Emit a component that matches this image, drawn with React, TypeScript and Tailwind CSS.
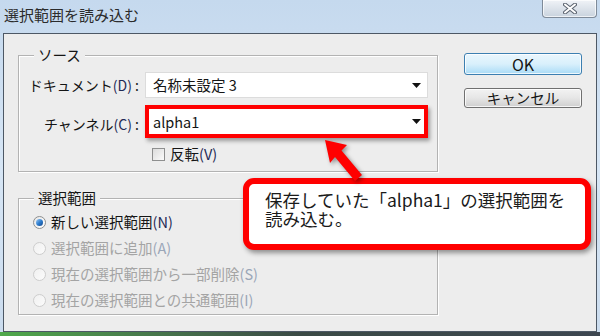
import React from "react";

const DropArrow = () => (
	<svg width="9" height="5" viewBox="0 0 9 5" className="shrink-0">
		<path d="M0 0 H9 L4.5 5 Z" fill="#111" />
	</svg>
);

const Radio = ({ checked, disabled, label, keyChar }: { checked?: boolean; disabled?: boolean; label: string; keyChar: string }) => (
	<div className="flex h-[26px] items-center">
		<div
			className={
				checked
					? "flex h-[13px] w-[13px] items-center justify-center rounded-full border border-[#8e8f8f] bg-gradient-to-br from-[#e6e6e6] to-[#ffffff]"
					: "h-[13px] w-[13px] rounded-full border border-[#cdcdcd] bg-gradient-to-br from-[#f0f0f0] to-[#fbfbfb]"
			}
		>
			{checked && <div className="h-[7px] w-[7px] rounded-full bg-gradient-to-br from-[#9ccbf1] via-[#2f7fd0] to-[#12468a]" />}
		</div>
		<span className={"ml-[5px] text-[14.5px] leading-[18px] " + (disabled ? "text-[#a4a4a4]" : "text-[#151515]")}>
			{label}
			<span className={disabled ? "text-[#9aa6b8]" : "text-[#1f2a55]"}>({keyChar})</span>
		</span>
	</div>
);

const App = () => {
	return (
		<div className="relative h-[336px] w-[600px] overflow-hidden bg-gradient-to-b from-[#c5d9ee] via-[#d7e6f5] to-[#cbdcee] font-['Noto_Sans_CJK_JP',sans-serif] text-[#151515]">
			{/* Title bar */}
			<div className="flex h-[33px] items-start justify-between">
				<div className="pl-[4px] pt-[5px] text-[15px] leading-[20px] text-[#2b2b2b]">選択範囲を読み込む</div>
				<div className="mr-[3px] flex h-[18px] w-[55px] items-center justify-center rounded-b-[4px] border border-t-0 border-[#7f8b99] bg-gradient-to-b from-[#f0f3f7] to-[#c9d3de] shadow-[inset_0_0_0_1px_rgba(255,255,255,0.7)]">
					<svg width="14" height="11" viewBox="0 0 14 11">
						<path d="M2 1.5 L12 9.5 M12 1.5 L2 9.5" stroke="#5c6470" strokeWidth="4" strokeLinecap="round" />
						<path d="M2 1.5 L12 9.5 M12 1.5 L2 9.5" stroke="#ffffff" strokeWidth="2" strokeLinecap="round" />
					</svg>
				</div>
			</div>

			{/* Dialog body */}
			<div className="mx-[3px] flex h-[299px] border border-[#4d5865] bg-[#ededed]">
				<div className="pl-[14px]">
					{/* ソース */}
					<div className="relative mt-[21px] h-[117px] w-[420px] border border-[#b3b3b3] shadow-[inset_1px_1px_0_#fff,1px_1px_0_#fff]">
						<span className="absolute -top-[11px] left-[15px] bg-[#ededed] px-[4px] text-[14.5px] leading-[20px]">ソース</span>
						<div className="mt-[16px] flex h-[26px] items-center">
							<div className="w-[122px] pr-[2px] text-right text-[14px] leading-[18px]">
								ドキュメント<span className="text-[#1f2a55]">(D)</span> :
							</div>
							<div className="ml-[4px] flex h-[26px] w-[283px] items-center justify-between border border-[#dcdcdc] bg-white pl-[7px] pr-[6px] text-[14.5px] leading-[18px]">
								<span>名称未設定 3</span>
								<DropArrow />
							</div>
						</div>
						<div className="mt-[7px] flex h-[33px] items-center">
							<div className="w-[122px] pr-[2px] pt-[5px] text-right text-[14px] leading-[18px]">
								チャンネル<span className="text-[#1f2a55]">(C)</span> :
							</div>
							<div className="ml-[4px] flex h-[33px] w-[283px] items-center justify-between border-[4px] border-[#ff0000] bg-white pl-[4px] pr-[3px] text-[14.5px] leading-[18px] shadow-[2px_3px_4px_rgba(0,0,0,0.35)]">
								<span>alpha1</span>
								<DropArrow />
							</div>
						</div>
						<div className="ml-[133px] mt-[9px] flex h-[14px] items-center">
							<div className="h-[13px] w-[13px] border border-[#8e8f8f] bg-gradient-to-br from-[#dcdcdc] to-[#fbfbfb]" />
							<span className="ml-[5px] text-[14.5px] leading-[18px]">
								反転<span className="text-[#1f2a55]">(V)</span>
							</span>
						</div>
					</div>

					{/* 選択範囲 */}
					<div className="relative mt-[26px] h-[117px] w-[420px] border border-[#b3b3b3] pl-[14px] pt-[10px] shadow-[inset_1px_1px_0_#fff,1px_1px_0_#fff]">
						<span className="absolute -top-[11px] left-[15px] bg-[#ededed] px-[4px] text-[14.5px] leading-[20px]">選択範囲</span>
						<Radio checked label="新しい選択範囲" keyChar="N" />
						<Radio disabled label="選択範囲に追加" keyChar="A" />
						<Radio disabled label="現在の選択範囲から一部削除" keyChar="S" />
						<Radio disabled label="現在の選択範囲との共通範囲" keyChar="I" />
					</div>
				</div>

				{/* Buttons */}
				<div className="ml-[26px] pt-[19px]">
					<div className="flex h-[22px] w-[118px] items-center justify-center rounded-[3px] border border-[#3c7fb1] bg-gradient-to-b from-[#eaf6fd] via-[#d9f0fc] to-[#a9dbf6] text-[16px] leading-[18px] shadow-[inset_0_0_0_1px_rgba(255,255,255,0.8)]">
						OK
					</div>
					<div className="mt-[13px] flex h-[20px] w-[118px] items-center justify-center rounded-[3px] border border-[#707070] bg-gradient-to-b from-[#f3f3f3] via-[#e6e6e6] to-[#cfcfcf] text-[14.5px] leading-[18px] shadow-[inset_0_0_0_1px_rgba(255,255,255,0.8)]">
						キャンセル
					</div>
				</div>
			</div>

			{/* bottom frame */}
			<div className="h-[4px] bg-gradient-to-r from-[#4fa94a] via-[#3b4a45] to-[#3d4650]" />

			{/* Annotation callout */}
			<div className="absolute left-[243px] top-[178px] flex h-[72px] w-[348px] flex-col rounded-[11px] border-[6px] border-[#ff0000] bg-white pl-[16px] pt-[6px] text-[17.5px] leading-[19px] text-[#1a1a1a] shadow-[2px_3px_5px_rgba(0,0,0,0.4)]">
				<span>保存していた「alpha1」の選択範囲を</span>
				<span>読み込む。</span>
			</div>

			{/* Annotation arrow */}
			<svg className="absolute left-[310px] top-[130px] drop-shadow-[2px_2px_2px_rgba(0,0,0,0.4)]" width="60" height="60" viewBox="0 0 60 60">
				<path d="M15 10 L37 15 L31.5 20.5 L52 45 L45 51 L25 27 L20 33 Z" fill="#ff0000" strokeLinejoin="round" />
			</svg>
		</div>
	);
};

export default App;
